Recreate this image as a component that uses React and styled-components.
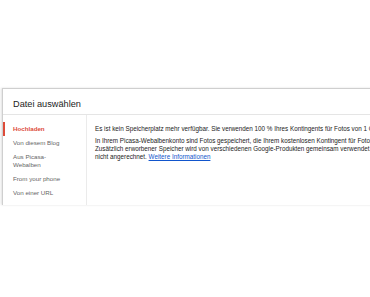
import React from 'react';
import styled, { createGlobalStyle } from 'styled-components';

const Global = createGlobalStyle`
    html, body {
        margin: 0;
        padding: 0;
        background: #fff;
        overflow: hidden;
    }
    body {
        font-family: "Liberation Sans", Arial, sans-serif;
    }
`;

const Page = styled.div`
    width: 370px;
    height: 297px;
    padding: 88px 0 0 2px;
    box-sizing: border-box;
`;

const Dialog = styled.div`
    width: 520px;
    background: #fff;
    border: 1px solid #cfcfcf;
    border-bottom: none;
    box-shadow: -1px 0 2px rgba(0, 0, 0, 0.12);
`;

const Header = styled.div`
    height: 26px;
    box-sizing: border-box;
    padding: 10px 0 0 10px;
    border-bottom: 1px solid #e5e5e5;
`;

const Title = styled.div`
    font-size: 9.2px;
    line-height: 11px;
    color: #222;
`;

const Body = styled.div`
    display: flex;
`;

const Nav = styled.div`
    width: 83px;
    flex-shrink: 0;
    padding: 7px 0 5px;
    border-right: 1px solid #ebebeb;
    display: flex;
    flex-direction: column;
`;

const NavItem = styled.div`
    padding: 3px 0 3px 8px;
    font-size: 6.2px;
    line-height: 8px;
    color: ${p => (p.$active ? '#dd4b39' : '#666')};
    font-weight: ${p => (p.$active ? 'bold' : 'normal')};
    border-left: 2px solid ${p => (p.$active ? '#dd4b39' : 'transparent')};
`;

const Content = styled.div`
    padding: 10px 0 0 8px;
    font-size: 6.3px;
    line-height: 8px;
    color: #222;
`;

const Para = styled.p`
    margin: 0 0 4px;
    white-space: nowrap;
`;

const Link = styled.a`
    color: #15c;
    text-decoration: underline;
`;

const items = ['Hochladen', 'Von diesem Blog', 'Aus Picasa-\nWebalben', 'From your phone', 'Von einer URL'];

const App = () => {
    return <Page>
        <Global />
        <Dialog>
            <Header>
                <Title>Datei auswählen</Title>
            </Header>
            <Body>
                <Nav>
                    {items.map((label, i) =>
                        <NavItem key={i} $active={i === 0}>
                            {label.split('\n').map((l, j) => <div key={j}>{l}</div>)}
                        </NavItem>
                    )}
                </Nav>
                <Content>
                    <Para>Es ist kein Speicherplatz mehr verfügbar. Sie verwenden 100 % Ihres Kontingents für Fotos von 1 GB.</Para>
                    <Para>
                        In Ihrem Picasa-Webalbenkonto sind Fotos gespeichert, die Ihrem kostenlosen Kontingent für Fotos angerechnet werden.<br />
                        Zusätzlich erworbener Speicher wird von verschiedenen Google-Produkten gemeinsam verwendet. Kleine Fotos werden<br />
                        nicht angerechnet. <Link href="#">Weitere Informationen</Link>
                    </Para>
                </Content>
            </Body>
        </Dialog>
    </Page>
}

export default App;
